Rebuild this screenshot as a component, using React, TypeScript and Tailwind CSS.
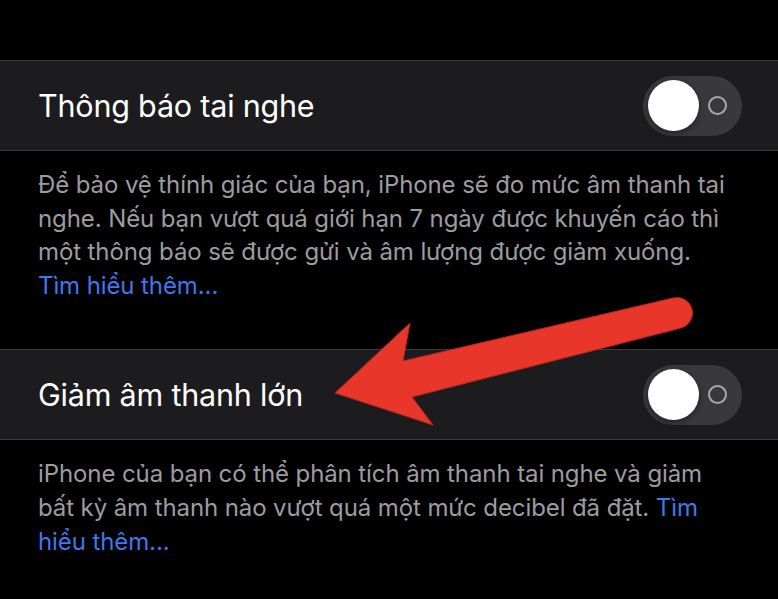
import React from "react";

function Toggle() {
  return (
    <div className="relative w-[99px] h-[60px] rounded-full bg-[#39393d] flex items-center shrink-0">
      <div className="ml-[5px] w-[51px] h-[51px] rounded-full bg-white shadow-[0_2px_6px_rgba(0,0,0,0.45)]" />
      <div className="ml-[9px] w-[19px] h-[19px] rounded-full border-[2px] border-[#a8a8ad]" />
    </div>
  );
}

function Cell({ title }: { title: string }) {
  return (
    <div className="h-[91px] border-y border-[#3a3a3c] bg-[#1c1c1e] flex items-center justify-between pl-[38px] pr-[36px]">
      <span className="text-[30.5px] text-white tracking-[-0.2px]">{title}</span>
      <Toggle />
    </div>
  );
}

export default function App() {
  return (
    <div
      className="relative w-[778px] h-[599px] overflow-hidden bg-black pt-[60px]"
      style={{ fontFamily: "Inter, 'Noto Sans', sans-serif" }}
    >
      <Cell title="Thông báo tai nghe" />
      <div className="px-[38px] pt-[17px] h-[198px] text-[24px] leading-[33.5px] text-[#9c9ca1] tracking-[-0.1px] whitespace-nowrap">
        <div>Để bảo vệ thính giác của bạn, iPhone sẽ đo mức âm thanh tai</div>
        <div>nghe. Nếu bạn vượt quá giới hạn 7 ngày được khuyến cáo thì</div>
        <div>một thông báo sẽ được gửi và âm lượng được giảm xuống.</div>
        <div className="text-[#3f78ee]">Tìm hiểu thêm...</div>
      </div>
      <Cell title="Giảm âm thanh lớn" />
      <div className="px-[38px] pt-[17px] text-[24px] leading-[34px] text-[#9c9ca1] tracking-[-0.1px] whitespace-nowrap">
        <div>iPhone của bạn có thể phân tích âm thanh tai nghe và giảm</div>
        <div>
          bất kỳ âm thanh nào vượt quá một mức decibel đã đặt.{" "}
          <span className="text-[#3f78ee]">Tìm</span>
        </div>
        <div className="text-[#3f78ee]">hiểu thêm...</div>
      </div>

      {/* red annotation arrow */}
      <svg
        className="absolute left-0 top-0 pointer-events-none"
        width="778"
        height="599"
        viewBox="0 0 778 599"
      >
        <path
          d="M335 393 L410 323 L403 361 L673 298 A15.5 15.5 0 0 1 681 328 L412 397 L433 425 Z"
          fill="#e8372a"
          stroke="#b8261c"
          strokeWidth="1"
          strokeLinejoin="round"
        />
      </svg>
    </div>
  );
}
